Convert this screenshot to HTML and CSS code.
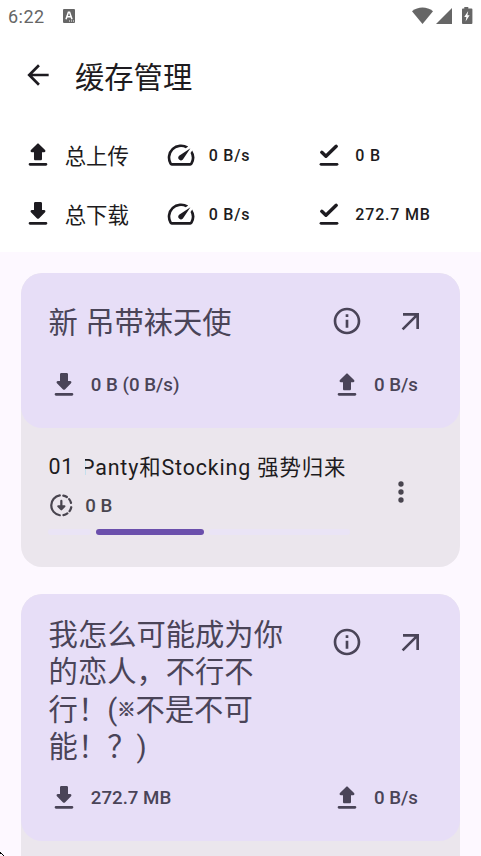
FILE: index.html
```html
<!DOCTYPE html>
<html lang="zh-CN">
<head>
<meta charset="utf-8">
<title>缓存管理</title>
<link rel="stylesheet" href="styles.css">
</head>
<body>
<svg class="defs" aria-hidden="true">
  <symbol id="upload" viewBox="0 0 24 24"><path d="M7.4 10h1.59v5c0 .55.45 1 1 1h4c.55 0 1-.45 1-1v-5h1.59c.89 0 1.34-1.08.71-1.71L12.7 3.7c-.39-.39-1.02-.39-1.41 0L6.7 8.29C6.07 8.92 6.51 10 7.4 10zM5 19c0 .55.45 1 1 1h12c.55 0 1-.45 1-1s-.45-1-1-1H6c-.55 0-1 .45-1 1z"/></symbol>
  <symbol id="download" viewBox="0 0 24 24"><path d="M16.59 9H15V4c0-.55-.45-1-1-1h-4c-.55 0-1 .45-1 1v5H7.41c-.89 0-1.34 1.08-.71 1.71l4.59 4.59c.39.39 1.02.39 1.41 0l4.59-4.59c.63-.63.19-1.71-.7-1.71zM5 19c0 .55.45 1 1 1h12c.55 0 1-.45 1-1s-.45-1-1-1H6c-.55 0-1 .45-1 1z"/></symbol>
  <symbol id="speed" viewBox="0 0 24 24"><path d="M20.38 8.57l-1.23 1.85a8 8 0 0 1-.22 7.58H5.07A8 8 0 0 1 15.58 6.85l1.85-1.23A10 10 0 0 0 3.35 19a2 2 0 0 0 1.72 1h13.85a2 2 0 0 0 1.74-1 10 10 0 0 0-.27-10.44zm-9.79 6.84a2 2 0 0 0 2.83 0l5.66-8.49-8.49 5.66a2 2 0 0 0 0 2.83z"/></symbol>
  <symbol id="done" viewBox="0 0 24 24"><path d="M6.600 10l3.100 2.900 7.700-7.400" fill="none" stroke="currentColor" stroke-width="2.600" stroke-linecap="round" stroke-linejoin="round"/><path d="M6 19h12" fill="none" stroke="currentColor" stroke-width="2.100" stroke-linecap="round"/></symbol>
  <symbol id="info" viewBox="0 0 24 24"><path d="M11 7h2v2h-2zm0 4h2v6h-2zm1-9C6.48 2 2 6.48 2 12s4.48 10 10 10 10-4.48 10-10S17.52 2 12 2zm0 18c-4.41 0-8-3.59-8-8s3.59-8 8-8 8 3.59 8 8-3.59 8-8 8z"/></symbol>
  <symbol id="outward" viewBox="0 0 24 24"><path d="M6 6v2h8.59L5 17.59 6.41 19 16 9.41V18h2V6z"/></symbol>
  <symbol id="more" viewBox="0 0 24 24"><circle cx="12" cy="6" r="2"/><circle cx="12" cy="12" r="2"/><circle cx="12" cy="18" r="2"/></symbol>
  <symbol id="downloading" viewBox="0 0 24 24"><path d="M10.6 3.1a9 9 0 0 0 0 17.8M13.8 3.2a9 9 0 0 1 3.2 1.3M19 6.4a9 9 0 0 1 1.7 3.4M20.9 13.7a9 9 0 0 1-1.5 3.5M17.4 19.2a9 9 0 0 1-3.5 1.6M12 8v5" fill="none" stroke="currentColor" stroke-width="2" stroke-linecap="round"/><path d="M9.2 12h5.6c.9 0 1.2.9.6 1.5l-2.7 2.7a1 1 0 0 1-1.4 0l-2.7-2.7c-.6-.6-.3-1.5.6-1.5z"/></symbol>
</svg>

<header class="top">
  <div class="status">
    <span class="clock">6:22</span>
    <svg class="ime" viewBox="0 0 12 14"><rect width="12" height="14" rx="1" fill="#666"/><path d="M3 10.3L5.4 3.3h1.2L9 10.3M4 7.7h4" fill="none" stroke="#fff" stroke-width="1.5"/><path d="M6 12h1M8 12h1M10 12h1" stroke="#fff"/></svg>
    <svg class="signals" viewBox="0 0 62 18"><path d="M0 4.200C6-.6 15-.6 21 4.200L10.500 17z"/><path d="M24 17L40 1v16z"/><g transform="translate(-1 0)"><path d="M53.300 0h4v1.500h3.200q.9 0 .9.900V16q0 .900-.900.900h-8.600q-.9 0-.9-.9V2.400q0-.9.9-.9h1.400z"/><path d="M57.200 4l-4 6h2.200l-.8 4.500 4-6.200h-2.200z" fill="#fff"/></g></svg>
  </div>
  <div class="appbar">
    <svg class="icon" viewBox="0 0 24 24"><path d="M20 11H7.830l5.590-5.590L12 4l-8 8 8 8 1.410-1.410L7.830 13H20v-2z"/></svg>
    <h1>缓存管理</h1>
  </div>
  <div class="totals">
    <svg class="icon"><use href="#upload"/></svg><span class="name">总上传</span>
    <svg class="icon"><use href="#speed"/></svg><span class="value">0 B/s</span>
    <svg class="icon"><use href="#done"/></svg><span class="value">0 B</span>
    <svg class="icon"><use href="#download"/></svg><span class="name">总下载</span>
    <svg class="icon"><use href="#speed"/></svg><span class="value">0 B/s</span>
    <svg class="icon"><use href="#done"/></svg><span class="value">272.7 MB</span>
  </div>
</header>

<main class="list">
  <section class="card">
    <div class="card-head">
      <div class="title-row">
        <h2>新 吊带袜天使</h2>
        <div class="actions"><svg class="icon"><use href="#info"/></svg><svg class="icon"><use href="#outward"/></svg></div>
      </div>
      <div class="stats">
        <svg class="icon"><use href="#download"/></svg><span class="stat down">0 B (0 B/s)</span>
        <svg class="icon"><use href="#upload"/></svg><span class="stat">0 B/s</span>
      </div>
    </div>
    <div class="episode">
      <div class="details">
        <div class="episode-name"><span class="number">01</span><div class="marquee"><span class="marquee-text">Panty和Stocking 强势归来</span></div></div>
        <div class="episode-size"><svg class="icon small"><use href="#downloading"/></svg><span>0 B</span></div>
        <div class="progress"><i class="track before"></i><i class="bar"></i><i class="track after"></i></div>
      </div>
      <svg class="icon"><use href="#more"/></svg>
    </div>
  </section>
  <section class="card">
    <div class="card-head">
      <div class="title-row tall">
        <h2>我怎么可能成为你<br>的恋人，不行不<br>行！(<span class="mark">※</span>不是不可<br>能！？)</h2>
        <div class="actions"><svg class="icon"><use href="#info"/></svg><svg class="icon"><use href="#outward"/></svg></div>
      </div>
      <div class="stats">
        <svg class="icon"><use href="#download"/></svg><span class="stat down">272.7 MB</span>
        <svg class="icon"><use href="#upload"/></svg><span class="stat">0 B/s</span>
      </div>
    </div>
    <div class="episode next"></div>
  </section>
</main>
<svg class="corner" viewBox="0 0 4 4"><path d="M0 0h1v1h1v1h1v1h1v1H3V3H2V2H0z"/></svg>
</body>
</html>
```
FILE: styles.css
```css
* { box-sizing: border-box; }
html, body { height: 100%; }
body {
  margin: 0;
  overflow: hidden;
  display: flex;
  flex-direction: column;
  background: #fdf8ff;
  color: #1d1b20;
  font-family: Roboto, "Noto Sans CJK SC", sans-serif;
}
h1, h2 { margin: 0; font-size: 29.3px; font-weight: 400; line-height: 37.5px; white-space: nowrap; }
h1 { padding-top: 7px; }
h2 { padding-top: 5px; }
.mark { font-size: 18.300px; line-height: 1; position: relative; top: -4px; -webkit-text-stroke: .6px currentColor; }
.defs { position: absolute; width: 0; height: 0; }
.icon { display: block; flex: none; width: 32px; height: 32px; fill: currentColor; }
.small { width: 26.7px; height: 26.7px; }
.corner { position: absolute; left: 0; bottom: 0; width: 4px; height: 4px; }

.top { flex: none; height: 251.500px; background: #fff; }
.status { height: 32px; padding: 0 7px 0 8px; display: flex; align-items: center; color: #666; }
.clock { font-size: 18px; letter-spacing: .5px; width: 55px; }
.ime { width: 12px; height: 14px; }
.signals { width: 62px; height: 18px; margin-left: auto; fill: #666; }
.appbar { height: 86px; padding: 0 21.500px; display: flex; align-items: center; gap: 21.500px; }
.totals {
  height: 118px;
  padding: 7.500px 0 0 21.500px;
  display: grid;
  grid-template-columns: 43.200px 100.700px 43.300px 104px 42.700px 1fr;
  grid-template-rows: 59px 59px;
  align-items: center;
}
.name { padding-top: 3px; font-size: 21.400px; line-height: 32px; }
.value { font-size: 16px; font-weight: 500; letter-spacing: .8px; }

.list { flex: none; padding: 21.500px 21.400px 0; display: flex; flex-direction: column; gap: 27px; }
.card { flex: none; border-radius: 21px; overflow: hidden; background: #ebe6ed; }
.card-head { padding: 21px 26.700px 26.500px 27.200px; border-radius: 21px; background: #e7def7; color: #4a4458; }
.title-row { min-height: 54px; display: flex; justify-content: space-between; align-items: center; }
.tall { height: 146.500px; align-items: flex-start; }
.tall h2 { padding-top: 2px; }
.tall .actions { margin-top: 11px; }
.actions { display: flex; gap: 32px; margin-right: 5.700px; }
.stats { height: 32px; margin: 21px 0 0 -.8px; display: flex; align-items: center; }
.stat { margin-left: 11px; width: 59px; font-size: 18.700px; font-weight: 500; white-space: nowrap; }
.down { width: auto; margin-right: auto; }
.episode { height: 139px; padding: 20px 43px 0 27.200px; display: flex; justify-content: space-between; }
.next { height: 40px; }
.episode > .icon { margin-top: 28px; color: #49454f; }
.details { width: 301px; }
.episode-name { display: flex; height: 37px; align-items: center; font-size: 21.400px; letter-spacing: .7px; }
.number { width: 36px; flex: none; }
.marquee { flex: 1; overflow: hidden; white-space: nowrap; margin-top: -2px; }
.marquee-text { display: inline-block; margin-left: -3.700px; letter-spacing: .87px; }
.episode-size { height: 41px; margin-left: -.5px; padding-top: 1px; display: flex; align-items: center; gap: 10.500px; color: #49454f; font-size: 18.700px; font-weight: 500; }
.progress { display: flex; gap: 5px; margin: 3.500px 0 0 -.7px; }
.progress i { height: 6px; border-radius: 3px; }
.track { background: #eae4f6; }
.before { width: 43px; }
.bar { width: 108px; background: #6b4fac; }
.after { flex: 1; }
```
